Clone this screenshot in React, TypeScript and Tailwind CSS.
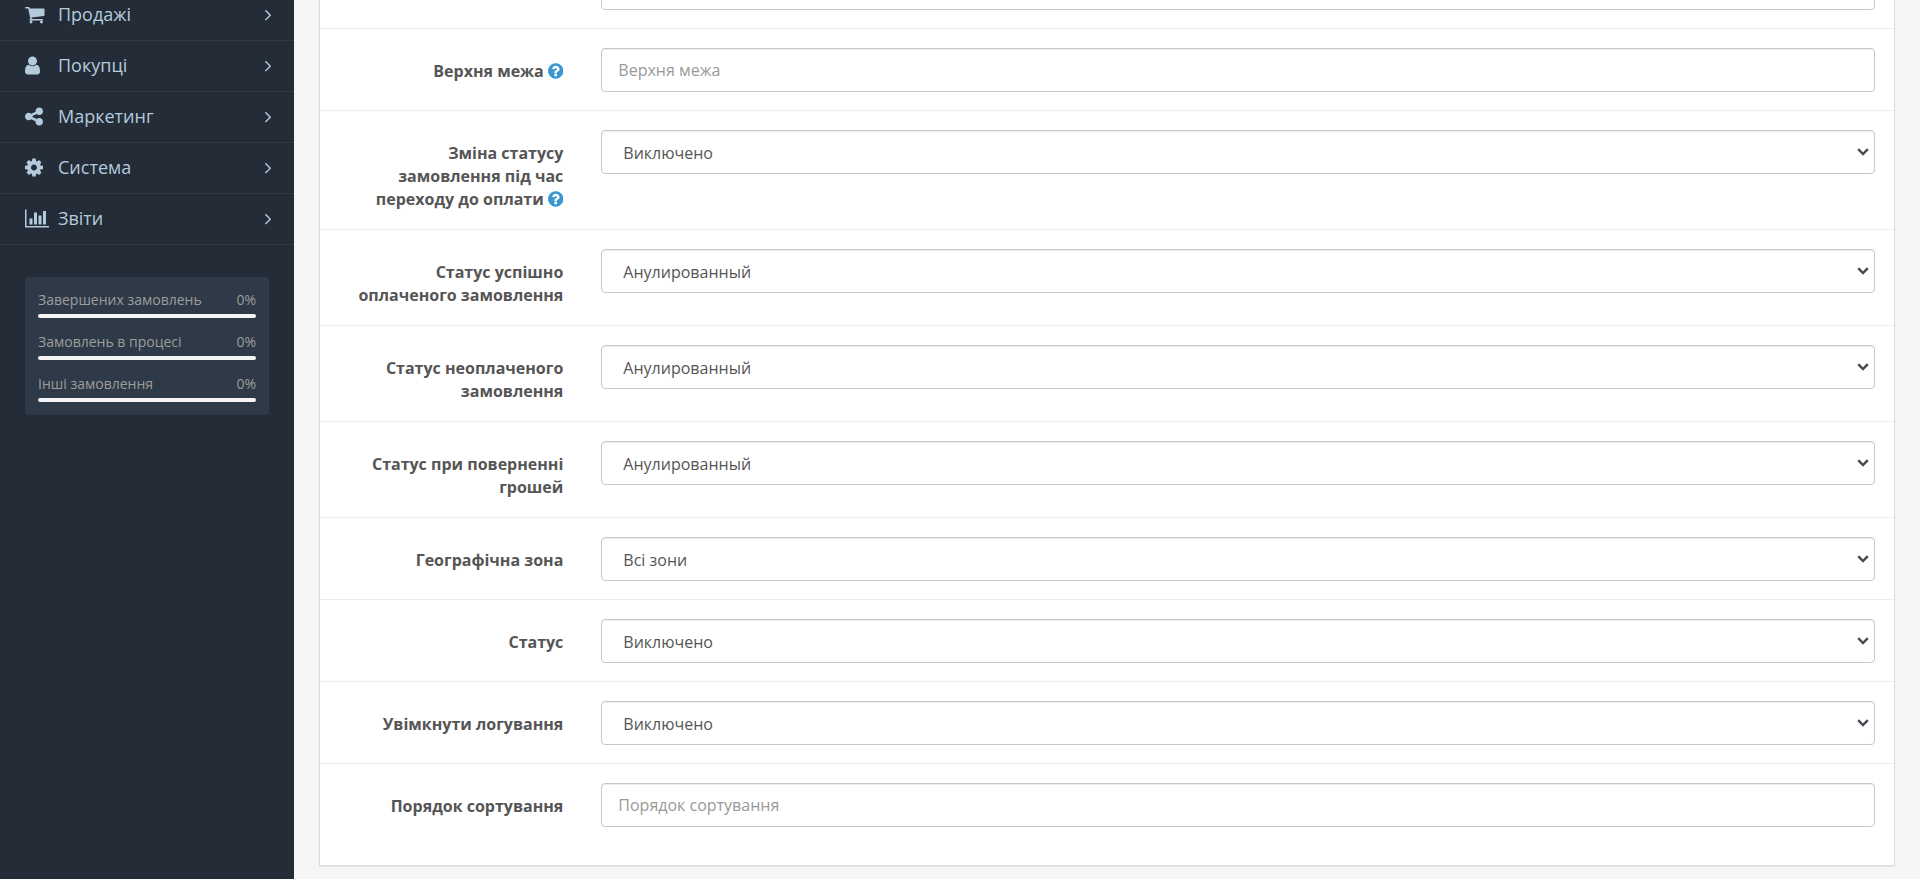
import type { ReactNode } from "react";

const ICONS = {
  cart: {
    left: 64,
    width: 1664,
    d: "M704 1536q0 52-38 90t-90 38-90-38-38-90 38-90 90-38 90 38 38 90zm896 0q0 52-38 90t-90 38-90-38-38-90 38-90 90-38 90 38 38 90zm128-1088v512q0 24-16.5 42.5t-40.5 21.5l-1044 122q13 60 13 70 0 16-24 64h920q26 0 45 19t19 45-19 45-45 19h-1024q-26 0-45-19t-19-45q0-11 8-31.5t16-36 21.5-40 15.5-29.5l-177-823h-204q-26 0-45-19t-19-45 19-45 45-19h256q16 0 28.5 6.5t19.5 15.5 13 24.5 8 26 5.5 29.5 4.5 26h1201q26 0 45 19t19 45z",
  },
  user: {
    left: 256,
    width: 1280,
    d: "M1536 1399q0 109-62.5 187t-150.5 78h-854q-88 0-150.5-78t-62.5-187q0-85 8.5-160.5t31.5-152 58.5-131 94-89 134.5-34.5q131 128 313 128t313-128q76 0 134.5 34.5t94 89 58.5 131 31.5 152 8.5 160.5zm-256-887q0 159-112.5 271.5t-271.5 112.5-271.5-112.5-112.5-271.5 112.5-271.5 271.5-112.5 271.5 112.5 112.5 271.5z",
  },
  share: {
    left: 128,
    width: 1536,
    d: "M1344 1024q133 0 226.5 93.5t93.5 226.5-93.5 226.5-226.5 93.5-226.5-93.5-93.5-226.5q0-12 2-34l-360-180q-92 86-218 86-133 0-226.5-93.5t-93.5-226.5 93.5-226.5 226.5-93.5q126 0 218 86l360-180q-2-22-2-34 0-133 93.5-226.5t226.5-93.5 226.5 93.5 93.5 226.5-93.5 226.5-226.5 93.5q-126 0-218-86l-360 180q2 22 2 34t-2 34l360 180q92-86 218-86z",
  },
  cog: {
    left: 128,
    width: 1536,
    d: "M1152 896q0-106-75-181t-181-75-181 75-75 181 75 181 181 75 181-75 75-181zm512-109v222q0 12-8 23t-20 13l-185 28q-19 54-39 91 35 50 107 138 10 12 10 25t-9 23q-27 37-99 108t-94 71q-12 0-26-9l-138-108q-44 23-91 38-16 136-29 186-7 28-36 28h-222q-14 0-24.5-8.5t-11.5-21.5l-28-184q-49-16-90-37l-141 107q-10 9-25 9-14 0-25-11-126-114-165-168-7-10-7-23 0-12 8-23 15-21 51-66.5t54-70.5q-27-50-41-99l-183-27q-13-2-21-12.5t-8-23.5v-222q0-12 8-23t19-13l186-28q14-46 39-92-40-57-107-138-10-12-10-24 0-10 9-23 26-36 98.5-107.5t94.5-71.5q13 0 26 10l138 107q44-23 91-38 16-136 29-186 7-28 36-28h222q14 0 24.5 8.5t11.5 21.5l28 184q49 16 90 37l142-107q9-9 24-9 13 0 25 10 129 119 165 170 7 8 7 22 0 12-8 23-15 21-51 66.5t-54 70.5q26 50 41 98l183 28q13 2 21 12.5t8 23.5z",
  },
  chart: {
    left: 0,
    width: 2048,
    d: "M640 896v512h-256v-512h256zm384-512v1024h-256v-1024h256zm1024 1152v128h-2048v-1536h128v1408h1920zm-640-896v768h-256v-768h256zm384-384v1152h-256v-1152h256z",
  },
  angle: {
    left: 589,
    width: 582,
    d: "M1171 960q0 13-10 23l-466 466q-10 10-23 10t-23-10l-50-50q-10-10-10-23t10-23l393-393-393-393q-10-10-10-23t10-23l50-50q10-10 23-10t23 10l466 466q10 10 10 23z",
  },
  question: {
    left: 128,
    width: 1536,
    d: "M1024 1376v-192q0-14-9-23t-23-9h-192q-14 0-23 9t-9 23v192q0 14 9 23t23 9h192q14 0 23-9t9-23zm256-672q0-88-55.5-163t-138.5-116-170-41q-243 0-371 213-15 24 8 42l132 100q7 6 19 6 16 0 25-12 53-68 86-92 34-24 86-24 48 0 85.5 26t37.5 59q0 38-20 61t-68 45q-63 28-115.5 86.5t-52.5 125.5v36q0 14 9 23t23 9h192q14 0 23-9t9-23q0-19 21.5-49.5t54.5-49.5q32-18 49-28.5t46-35 44.5-48 28-60.5 12.5-81zm384 192q0 209-103 385.5t-279.5 279.5-385.5 103-385.5-103-279.5-279.5-103-385.5 103-385.5 279.5-279.5 385.5-103 385.5 103 279.5 279.5 103 385.5z",
  },
};

type IconName = keyof typeof ICONS;

const Icon = ({ name, className }: { name: IconName; className: string }) => {
  const icon = ICONS[name];
  return (
    <svg viewBox={`${icon.left} 0 ${icon.width} 1792`} fill="currentColor" aria-hidden="true" className={className}>
      <path d={icon.d} />
    </svg>
  );
};

const Sidebar = () => {
  const menu: { icon: IconName; title: string }[] = [
    { icon: "cart", title: "Продажі" },
    { icon: "user", title: "Покупці" },
    { icon: "share", title: "Маркетинг" },
    { icon: "cog", title: "Система" },
    { icon: "chart", title: "Звіти" },
  ];

  const stats = [
    { title: "Завершених замовлень", value: 0 },
    { title: "Замовлень в процесі", value: 0 },
    { title: "Інші замовлення", value: 0 },
  ];

  return (
    <aside className="w-[294px] shrink-0 bg-[#242c38]">
      <ul className="-mt-2.5">
        {menu.map((item) => (
          <li key={item.title} className="border-b border-[#2e3a47]">
            <a href="#" className="flex h-[50px] items-center pr-[23px] pb-0.5 pl-[25px] text-[#b3cbdd]">
              <span className="w-[33px]">
                <Icon name={item.icon} className="h-[21px] w-auto" />
              </span>
              <span className="grow text-[18px]">{item.title}</span>
              <Icon name="angle" className="h-[19px] w-auto" />
            </a>
          </li>
        ))}
      </ul>

      <ul className="mx-[25px] mt-8 flex flex-col gap-3.5 rounded-[3px] bg-[#2e3a47] p-[13px]">
        {stats.map((stat) => (
          <li key={stat.title}>
            <div className="flex justify-between text-sm text-[#9d9d9d]">
              <span>{stat.title}</span>
              <span>{stat.value}%</span>
            </div>
            <div className="mt-1 h-1 overflow-hidden rounded-[2px] bg-[#f5f5f5]">
              <div className="h-full bg-[#5cb85c]" style={{ width: `${stat.value}%` }} />
            </div>
          </li>
        ))}
      </ul>
    </aside>
  );
};

const CONTROL =
  "block h-11 w-full rounded-[4px] border border-[#c7c7c7] bg-white text-base text-[#555] shadow-[inset_0_1px_1px_rgba(0,0,0,0.075)] outline-none placeholder:text-[#999]";

const Select = ({ id, value }: { id: string; value?: string }) => {
  return (
    <div className="relative">
      <select id={id} className={`${CONTROL} appearance-none pt-0.5 pr-6 pl-[21px]`}>
        <option>{value}</option>
      </select>
      <svg
        viewBox="0 0 12 8"
        fill="none"
        stroke="#4b4854"
        strokeWidth="2.4"
        aria-hidden="true"
        className="pointer-events-none absolute top-[18px] right-[6px] h-2 w-3"
      >
        <path d="M1.2 1.2 6 6l4.8-4.8" />
      </svg>
    </div>
  );
};

const FormRow = ({ id, label, help, children }: { id: string; label: string; help?: boolean; children: ReactNode }) => {
  return (
    <div className="grid grid-cols-12 border-t border-[#ededed] pt-[19px] pb-[18px] first:border-t-0 first:pt-0">
      <label htmlFor={id} className="col-span-2 pt-3 pr-[19px] pl-6 text-right text-base leading-[23px] font-bold text-[#555]">
        {label}
        {help && (
          <>
            {" "}
            <Icon name="question" className="inline h-[18px] w-auto align-[-3px] text-[#3a97d3]" />
          </>
        )}
      </label>
      <div className="col-span-10 px-[19px]">{children}</div>
    </div>
  );
};

const App = () => {
  const fields = [
    { id: "total-min", label: "", type: "text" },
    { id: "total-max", label: "Верхня межа", type: "text", help: true },
    { id: "status-change", label: "Зміна статусу замовлення під час переходу до оплати", type: "select", value: "Виключено", help: true },
    { id: "status-success", label: "Статус успішно оплаченого замовлення", type: "select", value: "Анулированный" },
    { id: "status-failed", label: "Статус неоплаченого замовлення", type: "select", value: "Анулированный" },
    { id: "status-refund", label: "Статус при поверненні грошей", type: "select", value: "Анулированный" },
    { id: "geo-zone", label: "Географічна зона", type: "select", value: "Всі зони" },
    { id: "status", label: "Статус", type: "select", value: "Виключено" },
    { id: "log", label: "Увімкнути логування", type: "select", value: "Виключено" },
    { id: "sort-order", label: "Порядок сортування", type: "text" },
  ];

  return (
    <div className="flex min-h-screen overflow-hidden bg-[#f6f6f6] font-['Open_Sans','Noto_Sans',sans-serif]">
      <Sidebar />
      <main className="min-w-0 grow px-[25px] pb-3">
        {/* the panel starts above the visible part of the page */}
        <form className="-mt-[34px] border border-t-0 border-[#dcdcdc] bg-white pb-5 shadow-[0_1px_1px_rgba(0,0,0,0.05)]">
          {fields.map((field) => (
            <FormRow key={field.id} id={field.id} label={field.label} help={field.help}>
              {field.type === "select" ? (
                <Select id={field.id} value={field.value} />
              ) : (
                <input id={field.id} type="text" placeholder={field.label} className={`${CONTROL} px-4`} />
              )}
            </FormRow>
          ))}
        </form>
      </main>
    </div>
  );
};

export default App;
